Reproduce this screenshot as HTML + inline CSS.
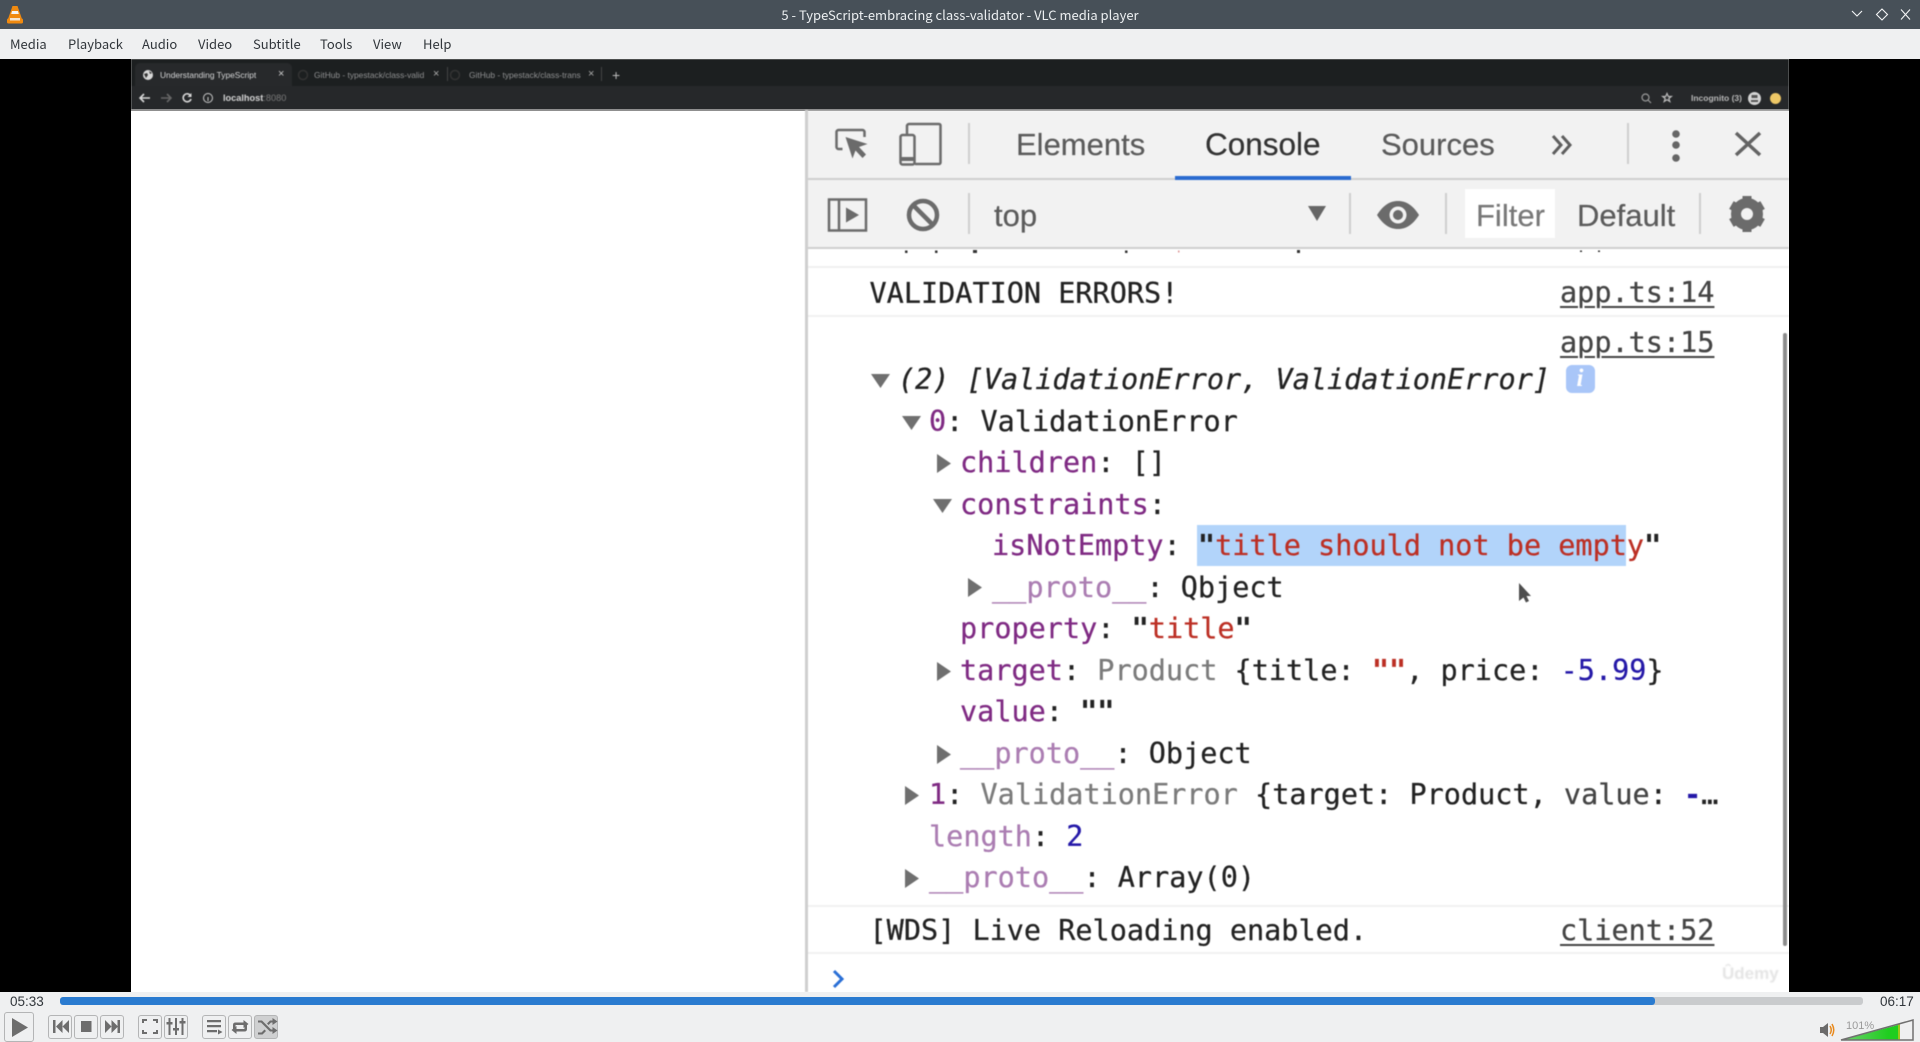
<!DOCTYPE html>
<html><head><meta charset="utf-8"><title>VLC</title>
<style>
html,body{margin:0;padding:0;width:1920px;height:1042px;overflow:hidden;background:#000}
*{box-sizing:border-box}
.a{position:absolute}
.t{position:absolute;white-space:pre;line-height:1}
#root{position:absolute;left:0;top:0;width:1920px;height:1042px;overflow:hidden;background:#000}
.ui{font-family:"Noto Sans CJK JP","Liberation Sans",sans-serif;font-size:13px;color:#31363b}
.m{position:absolute;white-space:pre;font-family:"DejaVu Sans Mono","Liberation Mono",monospace;font-size:28.5px;line-height:41.5px;height:41.5px;color:#222;-webkit-text-stroke:.25px currentColor}
.m b{font-weight:bold}
.p{color:#7f2a83}.d{color:#ab7db2}.s{color:#bc2f24}.n{color:#2418a8}.g{color:#7b7b7b}
.h{font-family:"Liberation Sans",sans-serif;font-size:31px;color:#5b5b5b;-webkit-text-stroke:.2px currentColor}
.sep{position:absolute;width:2px;background:#cfcfcf}
.btn{position:absolute;top:1015px;width:24px;height:24px;border:1px solid #b4b5b6;border-radius:3px;background:#eff0f1}
.l{text-decoration:underline;text-decoration-thickness:2px;text-underline-offset:4px;color:#444}
</style></head><body><div id="root">

<!-- title bar -->
<div class="a" style="left:0;top:0;width:1920px;height:29px;background:#475058"></div>
<svg class="a" style="left:5px;top:4px" width="20" height="21" viewBox="0 0 20 21"><polygon points="7.5,2 12.5,2 17,15 3,15" fill="#f08a10"/><polygon points="7,7 13,7 13.8,10 6.2,10" fill="#f4f4f4"/><rect x="2" y="14.5" width="16" height="5" rx="1.5" fill="#f08a10"/><rect x="5" y="14" width="10" height="2.5" fill="#f4e4d0"/></svg>
<div class="t" style="left:0;width:1920px;text-align:center;top:8px;font:13px/1 'Noto Sans CJK JP','Liberation Sans',sans-serif;color:#eceff1">5 - TypeScript-embracing class-validator - VLC media player</div>
<svg class="a" style="left:1848px;top:6px" width="70" height="17" viewBox="0 0 70 17" fill="none" stroke="#f4f5f6" stroke-width="1.1"><path d="M4 5l5 5 5-5"/><path d="M34 3l5.5 5.5L34 14l-5.5-5.500z"/><path d="M53 3.500l9 10M62 3.500l-9 10"/></svg>

<!-- menu -->
<div class="a" style="left:0;top:29px;width:1920px;height:30px;background:#eff0f1"></div>
<div class="t ui" style="left:10px;top:37px">Media</div>
<div class="t ui" style="left:68px;top:37px">Playback</div>
<div class="t ui" style="left:142px;top:37px">Audio</div>
<div class="t ui" style="left:198px;top:37px">Video</div>
<div class="t ui" style="left:253px;top:37px">Subtitle</div>
<div class="t ui" style="left:320px;top:37px">Tools</div>
<div class="t ui" style="left:373px;top:37px">View</div>
<div class="t ui" style="left:423px;top:37px">Help</div>

<!-- video content -->
<div class="a" style="left:131px;top:59px;width:1658px;height:933px;background:#fff;overflow:hidden">

 <!-- browser chrome -->
 <div class="a" style="left:0;top:0;width:1658px;height:51px;filter:blur(.5px);overflow:hidden">
  <div class="a" style="left:0;top:0;width:1658px;height:27px;background:#1c1f20"></div>
  <div class="a" style="left:0;top:27px;width:1658px;height:24px;background:#26282a"></div>
  <div class="a" style="left:4px;top:4px;width:157px;height:23px;background:#27292b;border-radius:5px 5px 0 0"></div>
  <svg class="a" style="left:11px;top:10px" width="12" height="12"><circle cx="6" cy="6" r="5" fill="#d8d8d8"/><path d="M2 5l3-1 1 2-2 3zM7 2l3 2-2 1z" fill="#333"/></svg>
  <div class="t" style="left:29px;top:12px;font:8.4px/1 'Liberation Sans',sans-serif;color:#d4d5d6">Understanding TypeScript</div>
  <div class="t" style="left:147px;top:10px;font:11px/1 'Liberation Sans',sans-serif;color:#ccc">×</div>
  <svg class="a" style="left:166px;top:10px" width="12" height="12"><circle cx="6" cy="6" r="4.500" fill="none" stroke="#333" stroke-width="1.500"/></svg>
  <div class="t" style="left:183px;top:12px;font:8.4px/1 'Liberation Sans',sans-serif;color:#8f9091">GitHub - typestack/class-valid</div>
  <div class="t" style="left:302px;top:10px;font:11px/1 'Liberation Sans',sans-serif;color:#aaa">×</div>
  <div class="a" style="left:316px;top:8px;width:1px;height:14px;background:#444"></div>
  <svg class="a" style="left:318px;top:10px" width="12" height="12"><circle cx="6" cy="6" r="4.500" fill="none" stroke="#333" stroke-width="1.500"/></svg>
  <div class="t" style="left:338px;top:12px;font:8.4px/1 'Liberation Sans',sans-serif;color:#8f9091">GitHub - typestack/class-trans</div>
  <div class="t" style="left:457px;top:10px;font:11px/1 'Liberation Sans',sans-serif;color:#aaa">×</div>
  <div class="a" style="left:470px;top:8px;width:1px;height:14px;background:#444"></div>
  <div class="t" style="left:481px;top:9px;font:14px/1 'Liberation Sans',sans-serif;color:#bbb">+</div>
  <svg class="a" style="left:6px;top:32px" width="70" height="14" fill="none" stroke-width="1.600"><path d="M13 7H3M7 3L3 7l4 4" stroke="#d8d8d8"/><path d="M24 7h10M30 3l4 4-4 4" stroke="#666"/><path d="M53.500 4.500A4 4 0 1 0 54 8" stroke="#d8d8d8"/><path d="M54.500 2v4h-4z" fill="#d8d8d8"/></svg>
  <svg class="a" style="left:71px;top:33px" width="12" height="12"><circle cx="6" cy="6" r="4.500" fill="none" stroke="#ccc"/><rect x="5.500" y="5" width="1" height="4" fill="#ccc"/></svg>
  <div class="t" style="left:92px;top:34.500px;font:bold 9.200px/1 'Liberation Sans',sans-serif;color:#d4d4d4">localhost<span style="font-weight:normal;color:#7a7a7a">:8080</span></div>
  <svg class="a" style="left:1509px;top:33px" width="36" height="12" fill="none" stroke="#9a9a9a" stroke-width="1.200"><circle cx="5.500" cy="5.500" r="3.500"/><path d="M8 8l3 3"/><path d="M27 1.500l1.300 3h3l-2.500 2 1 3-2.800-1.800-2.800 1.800 1-3-2.500-2h3z" stroke="#bbb"/></svg>
  <div class="t" style="left:1560px;top:34.500px;font:bold 8.500px/1 'Liberation Sans',sans-serif;color:#b8b8b8">Incognito (3)</div>
  <svg class="a" style="left:1617px;top:33px" width="13" height="13"><circle cx="6.500" cy="6.500" r="6.500" fill="#d4d4d4"/><rect x="3.500" y="3" width="6" height="3" fill="#555"/><rect x="3" y="8" width="7" height="2" fill="#555"/></svg>
  <div class="a" style="left:1639px;top:34px;width:11px;height:11px;border-radius:50%;background:#edc766"></div>
 </div>
 <div class="a" style="left:0;top:50px;width:1658px;height:1.500px;background:#8f8f8f"></div>

 <!-- devtools container -->
 <div class="a" style="left:0;top:0;width:1658px;height:933px;filter:blur(.55px)">
  <div class="a" style="left:674px;top:52px;width:984px;height:881px;background:#fff"></div>
  <div class="a" style="left:674px;top:51px;width:3px;height:882px;background:#cfcfcf"></div>
  <div class="a" style="left:677px;top:52px;width:981px;height:68px;background:#f2f2f2"></div>
  <div class="a" style="left:677px;top:119px;width:981px;height:2px;background:#cfcfcf"></div>
  <div class="a" style="left:1044px;top:117px;width:176px;height:4px;background:#2a6bd0"></div>
  <div class="a" style="left:677px;top:121px;width:981px;height:68px;background:#f2f2f2"></div>
  <div class="a" style="left:677px;top:188px;width:981px;height:2px;background:#cfcfcf"></div>
  <div class="a" style="left:677px;top:207px;width:981px;height:2px;background:#f0f0f0"></div>
  <div class="a" style="left:677px;top:256px;width:981px;height:2px;background:#f1f1f1"></div>
  <div class="a" style="left:677px;top:846px;width:981px;height:2px;background:#f1f1f1"></div>
  <div class="a" style="left:677px;top:893px;width:981px;height:2px;background:#f1f1f1"></div>

  <div class="sep" style="left:837px;top:64px;height:41px"></div>
  <div class="sep" style="left:1496px;top:64px;height:41px"></div>
  <div class="sep" style="left:837px;top:134px;height:41px"></div>
  <div class="sep" style="left:1218px;top:134px;height:41px"></div>
  <div class="sep" style="left:1314px;top:134px;height:41px"></div>
  <div class="sep" style="left:1568px;top:134px;height:41px"></div>

  <!-- toolbar 1 icons -->
  <svg class="a" style="left:695px;top:58px" width="125" height="54" viewBox="0 0 125 54" fill="none" stroke="#6b6b6b" stroke-width="2.500">
   <g transform="translate(3.500,3)">
   <path d="M13 29H9a2 2 0 0 1-2-2V12a2 2 0 0 1 2-2h24a2 2 0 0 1 2 2v5"/>
   <path d="M16 17l22 7-8.500 3 7 7.500-3.500 3.500-7-7.500-3 8z" fill="#6b6b6b" stroke="none"/>
   </g>
   <path d="M81 18v-9a2 2 0 0 1 2-2h30a1.500 1.500 0 0 1 1.500 1.500v37a1.500 1.500 0 0 1-1.500 1.500H89"/>
   <rect x="74.500" y="18" width="14" height="29.500" rx="2"/><path d="M75 42h14" stroke-width="4"/>
  </svg>
  <div class="t h" style="left:885px;top:70px">Elements</div>
  <div class="t h" style="left:1074px;top:70px;color:#333;font-size:31.500px">Console</div>
  <div class="t h" style="left:1250px;top:70px">Sources</div>
  <svg class="a" style="left:1419px;top:74px" width="26" height="24" fill="none" stroke="#5e5e5e" stroke-width="3"><path d="M3 3l8 9-8 9M12 3l8 9-8 9"/></svg>
  <svg class="a" style="left:1538px;top:70px" width="14" height="34" fill="#666"><circle cx="7" cy="5" r="3.800"/><circle cx="7" cy="16" r="3.800"/><circle cx="7" cy="29" r="3.800"/></svg>
  <svg class="a" style="left:1603px;top:72px" width="28" height="26" fill="none" stroke="#646464" stroke-width="3.500"><path d="M2 2l24 22M26 2L2 24"/></svg>

  <!-- toolbar 2 icons -->
  <svg class="a" style="left:696px;top:138px" width="42" height="36" fill="none" stroke="#6b6b6b" stroke-width="2.500"><rect x="2" y="2.500" width="37" height="31"/><path d="M12 2.500v31"/><path d="M19 10.500l13 7.500-13 7.500z" fill="#6b6b6b" stroke="none"/></svg>
  <svg class="a" style="left:775px;top:139px" width="34" height="34" fill="none" stroke="#6b6b6b" stroke-width="4.500"><circle cx="17" cy="17" r="14"/><path d="M7 7l20 20"/></svg>
  <div class="t h" style="left:680px;top:141px;padding-left:183px;color:#5b5b5b">top</div>
  <svg class="a" style="left:1177px;top:147px" width="18" height="15"><polygon points="0,0 18,0 9,15" fill="#666"/></svg>
  <svg class="a" style="left:1245px;top:141px" width="44" height="30"><path d="M1 15C8 4 15 1 22 1s14 3 21 14c-7 11-14 14-21 14S8 26 1 15z" fill="#6b6b6b"/><circle cx="22" cy="15" r="8.500" fill="#f2f2f2"/><circle cx="22" cy="15" r="5" fill="#6b6b6b"/></svg>
  <div class="a" style="left:1334px;top:130px;width:90px;height:49px;background:#fff"></div>
  <div class="t h" style="left:1345px;top:141px;color:#787878">Filter</div>
  <div class="t h" style="left:1446px;top:141px">Default</div>
  <svg class="a" style="left:1597px;top:136px" width="38" height="38" viewBox="0 0 38 38"><circle cx="19" cy="19" r="11" fill="none" stroke="#6b6b6b" stroke-width="10"/><g fill="#6b6b6b"><rect x="14.500" y="1" width="9" height="8"/><rect x="14.500" y="29" width="9" height="8"/><rect x="14.500" y="1" width="9" height="8" transform="rotate(60 19 19)"/><rect x="14.500" y="1" width="9" height="8" transform="rotate(120 19 19)"/><rect x="14.500" y="1" width="9" height="8" transform="rotate(240 19 19)"/><rect x="14.500" y="1" width="9" height="8" transform="rotate(300 19 19)"/></g></svg>

  <!-- clipped previous line specks -->
  <svg class="a" style="left:677px;top:190px" width="981" height="5" fill="#333"><rect x="97" y="1.500" width="2.500" height="2.500"/><rect x="127" y="1.500" width="2.500" height="2.500"/><rect x="165" y="1" width="4" height="3"/><rect x="317" y="1.500" width="2.500" height="2.500"/><rect x="370" y="1.500" width="1.500" height="2" fill="#d99"/><rect x="489" y="1" width="3" height="3"/><rect x="772" y="1.500" width="2" height="1.500"/><rect x="790" y="1.500" width="2" height="1.500"/></svg>

  <!-- console text -->
  <div class="m" style="left:738.500px;top:214px">VALIDATION ERRORS!</div>
  <div class="m l" style="left:1429px;top:213px;height:auto">app.ts:14</div>
  <div class="m l" style="left:1429px;top:263px;height:auto">app.ts:15</div>

  <svg class="a" style="left:740px;top:314px" width="20" height="16"><polygon points="0,1 19,1 9.500,15" fill="#6f6f6f"/></svg>
  <div class="m" style="left:767px;top:300px;font-style:italic">(2) [ValidationError, ValidationError]</div>
  <div class="a" style="left:1434.500px;top:306px;width:29px;height:28px;border-radius:6px;background:#a9c6f8;color:#fff;font:italic bold 25px/28px 'Liberation Serif',serif;text-align:center">i</div>

  <svg class="a" style="left:771px;top:355.500px" width="20" height="16"><polygon points="0,1 19,1 9.500,15" fill="#6f6f6f"/></svg>
  <div class="m" style="left:798px;top:341.500px"><span class="p">0</span>: ValidationError</div>

  <svg class="a" style="left:805px;top:395px" width="16" height="20"><polygon points="1,0 15,9.500 1,19" fill="#6f6f6f"/></svg>
  <div class="m" style="left:829px;top:383px"><span class="p">children</span>: []</div>

  <svg class="a" style="left:802px;top:438.500px" width="20" height="16"><polygon points="0,1 19,1 9.500,15" fill="#6f6f6f"/></svg>
  <div class="m" style="left:829px;top:424.500px"><span class="p">constraints</span>:</div>

  <div class="a" style="left:1066px;top:466px;width:429px;height:41px;background:#b2d4fa"></div>
  <div class="m" style="left:861px;top:466px"><span class="p">isNotEmpty</span>: <b>"</b><span class="s">title should not be empty</span><b>"</b></div>

  <svg class="a" style="left:836px;top:519px" width="16" height="20"><polygon points="1,0 15,9.500 1,19" fill="#6f6f6f"/></svg>
  <div class="m" style="left:861px;top:507.500px"><span class="d">__proto__</span>: Qbject</div>

  <div class="m" style="left:829px;top:549px"><span class="p">property</span>: <b>"</b><span class="s">title</span><b>"</b></div>

  <svg class="a" style="left:805px;top:602.500px" width="16" height="20"><polygon points="1,0 15,9.500 1,19" fill="#6f6f6f"/></svg>
  <div class="m" style="left:829px;top:590.500px"><span class="p">target</span>: <span class="g">Product</span> {title: <b class="s">""</b>, price: <span class="n">-5.99</span>}</div>

  <div class="m" style="left:829px;top:632px"><span class="p">value</span>: <b>""</b></div>

  <svg class="a" style="left:805px;top:685.500px" width="16" height="20"><polygon points="1,0 15,9.500 1,19" fill="#6f6f6f"/></svg>
  <div class="m" style="left:829px;top:673.500px"><span class="d">__proto__</span>: Object</div>

  <svg class="a" style="left:773px;top:727px" width="16" height="20"><polygon points="1,0 15,9.500 1,19" fill="#6f6f6f"/></svg>
  <div class="m" style="left:798px;top:715px"><span class="p">1</span>: <span class="g">ValidationError</span> {target: Product, <span style="color:#444">value</span>: <span class="n"><b>-</b></span>…</div>

  <div class="m" style="left:798px;top:756.500px"><span class="d">length</span>: <span class="n">2</span></div>

  <svg class="a" style="left:773px;top:810px" width="16" height="20"><polygon points="1,0 15,9.500 1,19" fill="#6f6f6f"/></svg>
  <div class="m" style="left:798px;top:798px"><span class="d">__proto__</span>: Array(0)</div>

  <div class="m" style="left:738.500px;top:850.500px">[WDS] Live Reloading enabled.</div>
  <div class="m l" style="left:1429px;top:850.500px;height:auto">client:52</div>

  <div class="a" style="left:1652px;top:274px;width:4px;height:613px;background:#8c8c8c;border-radius:2px"></div>

  <svg class="a" style="left:700px;top:910px" width="16" height="20" fill="none" stroke="#2a6fd6" stroke-width="3"><path d="M3 2l8 8-8 8"/></svg>
  <svg class="a" style="left:1387px;top:523px" width="15" height="24"><path d="M1 1v18l4.500-3.500 2.500 5 3-1.500-2.500-5H13z" fill="#4d4d4d"/></svg>
  <div class="t" style="left:1591px;top:906px;font:bold 17px/1 'Liberation Sans',sans-serif;color:#e4e4e4;filter:blur(.6px)">Ûdemy</div>
 </div>
</div>

<!-- controls -->
<div class="a" style="left:0;top:992px;width:1920px;height:50px;background:#eff0f1"></div>
<div class="t" style="left:10px;top:995px;font:13.500px/1 'Liberation Sans',sans-serif;color:#31363b">05:33</div>
<div class="t" style="left:1880px;top:995px;font:13.500px/1 'Liberation Sans',sans-serif;color:#31363b">06:17</div>
<div class="a" style="left:60px;top:997px;width:1803px;height:8px;border-radius:3px;background:#c9cbcd"></div>
<div class="a" style="left:60px;top:997px;width:1595px;height:8px;border-radius:3px;background:#2a7bd0"></div>

<div class="a" style="left:4px;top:1012px;width:30px;height:30px;border:1px solid #b4b5b6;border-radius:3px;background:#eff0f1"></div>
<svg class="a" style="left:3px;top:1012px" width="30" height="30"><polygon points="9,6 25,15.500 9,25" fill="#6d6d6d"/></svg>

<div class="btn" style="left:48px"></div><div class="btn" style="left:74px"></div><div class="btn" style="left:100px"></div>
<div class="btn" style="left:138px"></div><div class="btn" style="left:164px"></div>
<div class="btn" style="left:202px"></div><div class="btn" style="left:228px"></div><div class="btn" style="left:254px;background:#cfd0d1"></div>

<svg class="a" style="left:0;top:1012px" width="290" height="30" fill="#6d6d6d">
 <path d="M53 8h2.500v13H53zM56 14.500L62.500 8v13zM62.500 14.500L69 8v13z"/>
 <rect x="81" y="9" width="10.500" height="11"/>
 <path d="M105 8l6.500 6.500L105 21zM111.500 8l6.500 6.500-6.500 6.500zM117.500 8h2.500v13h-2.500z"/>
 <path d="M142 11V7h5v2h-3v2zM153 7h5v4h-2V9h-3zM142 18h2v2h3v2h-5zM156 18h2v4h-5v-2h3z"/>
 <path d="M168.500 6h2v17h-2zM175 6h2v17h-2zM181.500 6h2v17h-2zM166.500 10h6v2.500h-6zM173 16h6v2.500h-6zM179.500 9h6v2.500h-6z"/>
 <path d="M207 8h14v2.200h-14zM207 13h14v2.200h-14zM207 18h10v2.200h-10zM218 17.500l4.500 2.500-4.500 2.500z"/>
 <path d="M233 19v-6q0-2.500 2.500-2.500h8V8l5 4-5 4v-3h-7.500q-.5 0-.5.5v5.500zM247 11v6q0 2.500-2.500 2.500h-8V22l-5-4 5-4v3h7.500q.5 0 .5-.5V11z"/>
 <path d="M259 9h4l9 9h1.500v-2.500l5 3.500-5 3.500V20h-2.500l-9-9h-3zM259 21h3.500l3-3 1.500 1.500-3.500 3.500H259zM271 9h2.500V6.500l5 3.500-5 3.500V11h-1.500l-2.500 2.500-1.500-1.500z" transform="translate(-1,-.5)"/>
</svg>

<!-- volume -->
<svg class="a" style="left:1818px;top:1015px" width="100" height="27">
 <path d="M2 12h3l5-4v14l-5-4H2z" fill="#6b6b6b"/>
 <path d="M12 11q2.500 4 0 8M14 9q3.500 6 0 12" fill="none" stroke="#e8891c" stroke-width="1.500"/>
 <defs><linearGradient id="vg" x1="0" x2="1"><stop offset="0" stop-color="#6fd06f"/><stop offset=".8" stop-color="#1fce1f"/></linearGradient></defs>
 <polygon points="24,25 82,9.500 82,25" fill="url(#vg)"/>
 <rect x="80" y="9.500" width="2" height="15.500" fill="#9cc81a"/>
 <polygon points="23,25 95,5 95,25" fill="none" stroke="#707070" stroke-width="1.500"/>
</svg>
<div class="t" style="left:1846px;top:1021px;font:11px/1 'Liberation Sans',sans-serif;color:#9a9a9a">101%</div>

</div></body></html>
